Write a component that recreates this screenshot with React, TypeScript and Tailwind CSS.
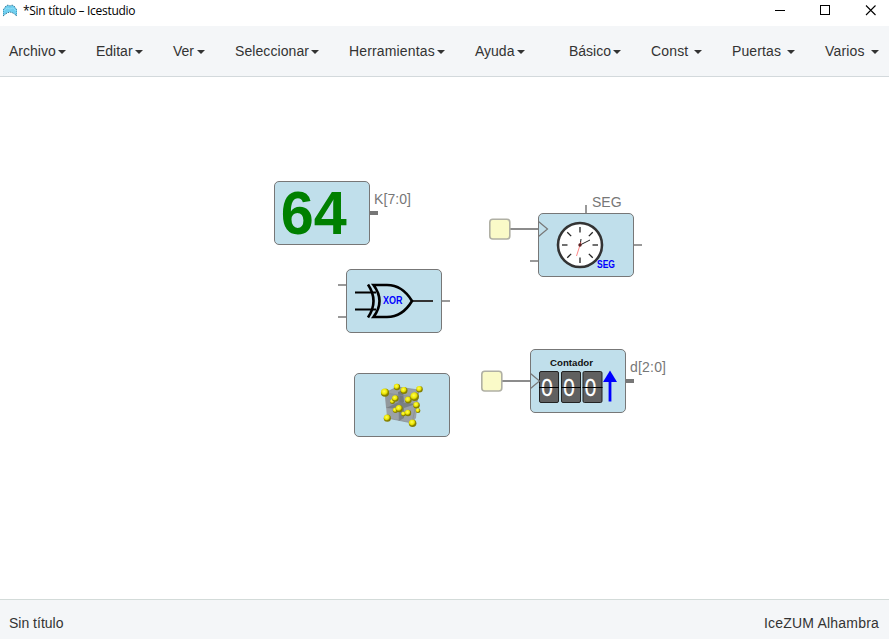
import React from "react";

const sans = "font-['Liberation_Sans',Arial,sans-serif]";

function Menu({ label, size, spaced = false }: { label: string; size: string; spaced?: boolean }) {
  return (
    <button className={`flex items-center justify-between whitespace-pre text-[14px] leading-5 text-[#333] ${size}`}>
      {spaced ? label + " " : label}
      <span className="mt-[2px] h-0 w-0 shrink-0 border-x-4 border-t-4 border-x-transparent border-t-[#333]" />
    </button>
  );
}

function Block({ place, children }: { place: string; children: React.ReactNode }) {
  return (
    <div className={`absolute h-16 w-24 rounded-[5px] border border-[#777] bg-[#C0DFEB] ${place}`}>
      <svg className="absolute -left-px -top-px overflow-visible" width="96" height="64" viewBox="0 0 96 64">
        {children}
      </svg>
    </div>
  );
}

const Wire = ({ d, width = 2, color = "#999" }: { d: string; width?: number; color?: string }) => (
  <path d={d} stroke={color} strokeWidth={width} fill="none" />
);

// Clock pin: the yellow virtual port, its wire and the edge marker.
function ClockInput({ y }: { y: number }) {
  return (
    <g transform={`translate(0 ${y})`}>
      <Wire d="M-28 0H0" color="#8c8c8c" />
      <rect x="-48.2" y="-9.8" width="20" height="19.8" rx="3" fill="#fafac8" stroke="#b0b0a4" strokeWidth="1.6" />
      <path d="M.5 -7.5L9.5 0L.5 7.5" fill="none" stroke="#777" strokeWidth="1.2" />
    </g>
  );
}

const crystal = [
  [31, 19.7, 4.1], [43, 14, 3.2], [38.5, 28.5, 2.5], [41.3, 25.5, 3.3], [50, 17.5, 3.5], [65.5, 16.3, 3.3],
  [54.3, 27, 3.4], [60.6, 23.7, 4.4], [62.5, 32.2, 3.3], [64, 37.7, 2.4], [41.5, 37.3, 2.7], [45.2, 35.7, 3.6],
  [49.5, 41, 2.4], [54, 40, 3.2], [33.3, 45.2, 3.6], [58.6, 50.2, 3.8],
];

function Titlebar() {
  return (
    <header className="flex h-[26px] items-start justify-between bg-white">
      <div className="flex items-center pl-[3px] pt-[2px]">
        <svg width="14" height="13" viewBox="0 0 14 13">
          <path d="M0 12V6L3 2L5 1L7 2L9 1L11 2L14 6V12L10 9L7 8L4 9Z" fill="#6fcff0" />
          <path d="M1 7L4 4L7 5L10 4L13 7" fill="none" stroke="#8edcf4" />
          <path d="M0 12V6L3 2L5 1L7 2L9 1L11 2L14 6V12M0 12L4 9L7 8L10 9L14 12" fill="none" stroke="#286886" strokeDasharray="1 1" />
        </svg>
        <span className="ml-[6px] whitespace-nowrap font-['Open_Sans','Noto_Sans',sans-serif] text-[12px] leading-[17px] tracking-[-0.29px] text-black">*Sin título – Icestudio</span>
      </div>
      <svg className="mr-3 mt-[5px]" width="102" height="11" viewBox="0 0 102 11" shapeRendering="crispEdges" fill="none" stroke="#000">
        <path d="M0 5.5h10" />
        <rect x="45.5" y=".5" width="9" height="9" />
        <path d="M91 .5l9.5 9.5m0-9.5l-9.5 9.5" shapeRendering="auto" strokeWidth="1.1" />
      </svg>
    </header>
  );
}

export default function App() {
  return (
    <div className={`flex h-[639px] w-[889px] flex-col overflow-hidden bg-white ${sans}`}>
      <Titlebar />
      <nav className="flex h-[51px] items-center justify-between border-b border-[#d3d9dc] bg-[#f4f6f8] pl-[9px] pr-[10px]">
        <div className="flex gap-[30px]">
          <Menu label="Archivo" size="w-[57px]" />
          <Menu label="Editar" size="w-[47px]" />
          <Menu label="Ver" size="w-8" />
          <Menu label="Seleccionar" size="w-[84px] tracking-[0.08px]" />
          <Menu label="Herramientas" size="w-[96px] tracking-[0.15px]" />
          <Menu label="Ayuda" size="w-[50px]" />
        </div>
        <div className="flex gap-[30px]">
          <Menu label="Básico" size="w-[52px]" />
          <Menu label="Const" size="w-[51px] tracking-[0.15px]" spaced />
          <Menu label="Puertas" size="w-[63px] tracking-[0.12px]" spaced />
          <Menu label="Varios" size="w-[54px] tracking-[0.15px]" spaced />
        </div>
      </nav>
      <main className="relative flex-1">
        <Block place="left-[274px] top-[104px]">
          <Wire d="M96 32h8" width={4} color="#777" />
          <text x="6.8" y="53.3" fontSize="61" fontWeight="bold" fill="green" textLength="66" lengthAdjust="spacingAndGlyphs">64</text>
          <text x="100" y="23" fontSize="14" fill="#777" textLength="37">K[7:0]</text>
        </Block>

        <Block place="left-[346px] top-[192px]">
          <Wire d="M-8 16h8M-8 48h8M96 32h8" />
          <g fill="none" stroke="#000">
            <path d="M9 23.5h21M9 40.5h21" strokeWidth="2" />
            <path d="M65 32h22" stroke="#333" strokeWidth="2" />
            <path d="M22 15.5Q33 32 22 48.5M27.5 16H41C52 16 60 22 66 32C60 42 52 48 41 48H27.5Q39.5 32 27.5 16Z" strokeWidth="2.6" />
          </g>
          <text x="37" y="35.3" fontSize="10" fontWeight="bold" fill="#00f" textLength="19.5" lengthAdjust="spacingAndGlyphs">XOR</text>
        </Block>

        <Block place="left-[354px] top-[296px]">
          <defs>
            <radialGradient id="atom" cx="40%" cy="35%">
              <stop offset="0" stopColor="#ffff55" />
              <stop offset=".65" stopColor="#ece500" />
              <stop offset="1" stopColor="#858000" />
            </radialGradient>
          </defs>
          <path d="M31 20L43 14L65 17L62 45L58 50L33 45Z" fill="#9ba1a6" />
          <path d="M31 20L45 22L45 32L32 35Z" fill="#92989c" />
          <path d="M44 19L49 17L50 29L45 34Z" fill="#747a7e" />
          <path d="M32 35L45 29L62 31L47 36Z" fill="#7a8084" />
          <path d="M45 34L50 31V45L45 48Z" fill="#7a8084" />
          <path d="M31 20L43 14L65 17L58 50M45 22V48M31 20L60 24M33 45L58 50" fill="none" stroke="#868c90" strokeWidth=".7" />
          {crystal.map(([cx, cy, r]) => <circle key={`${cx}-${cy}`} cx={cx} cy={cy} r={r} fill="url(#atom)" />)}
        </Block>

        <Block place="left-[538px] top-[136px]">
          <Wire d="M48 -8v8M-8 48h8M96 32h8" />
          <ClockInput y={16} />
          <text x="54" y="-6" fontSize="14" fill="#777">SEG</text>
          <circle cx="42" cy="32" r="22" fill="#fff" stroke="#333" strokeWidth="2.6" />
          {[0, 45, 90, 135, 180, 225, 270, 315].map((angle) => (
            <path key={angle} d="M42 14v5.5" transform={`rotate(${angle} 42 32)`} stroke="#222" strokeWidth="1.3" />
          ))}
          <path d="M42 32L52 27M42 33L43 26" stroke="#222" strokeWidth="1" />
          <path d="M43 29L38.5 43" stroke="#f66" strokeWidth=".8" />
          <circle cx="42" cy="32" r="1.7" fill="#5b2020" />
          <text x="59" y="55" fontSize="10" fontWeight="bold" fill="#00f" textLength="18" lengthAdjust="spacingAndGlyphs">SEG</text>
        </Block>

        <Block place="left-[530px] top-[272px]">
          <Wire d="M96 32h8" width={4} color="#777" />
          <text x="100" y="23" fontSize="14" fill="#777" textLength="36">d[2:0]</text>
          <text x="20" y="17" fontSize="9.8" fontWeight="bold" fill="#111" textLength="43" lengthAdjust="spacingAndGlyphs">Contador</text>
          {[9, 31, 52.5].map((x) => (
            <g key={x}>
              <rect x={x + 0.5} y="22.5" width="19" height="31" rx="1.5" fill="#606060" stroke="#222" />
              <text x={x + 2} y="46.5" fontSize="23" fill="#fff" stroke="#fff" strokeWidth=".3" className="font-['Open_Sans',sans-serif]" textLength="12" lengthAdjust="spacingAndGlyphs">0</text>
              <path d={`M${x} 38.5h20`} stroke="#000" />
            </g>
          ))}
          <path d="M80 52.5V31" stroke="#00f" strokeWidth="2.8" />
          <path d="M73 33L80 21.5L87 33Z" fill="#00f" />
          <ClockInput y={32} />
        </Block>
      </main>
      <footer className="flex h-10 items-center justify-between border-t border-[#d3dbd9] bg-[#f4f6f8] pb-px pl-[9px] pr-[10px] pt-[7px] text-[14px] leading-5 text-[#333]">
        <span>Sin título</span>
        <span className="tracking-[0.2px]">IceZUM Alhambra</span>
      </footer>
    </div>
  );
}
